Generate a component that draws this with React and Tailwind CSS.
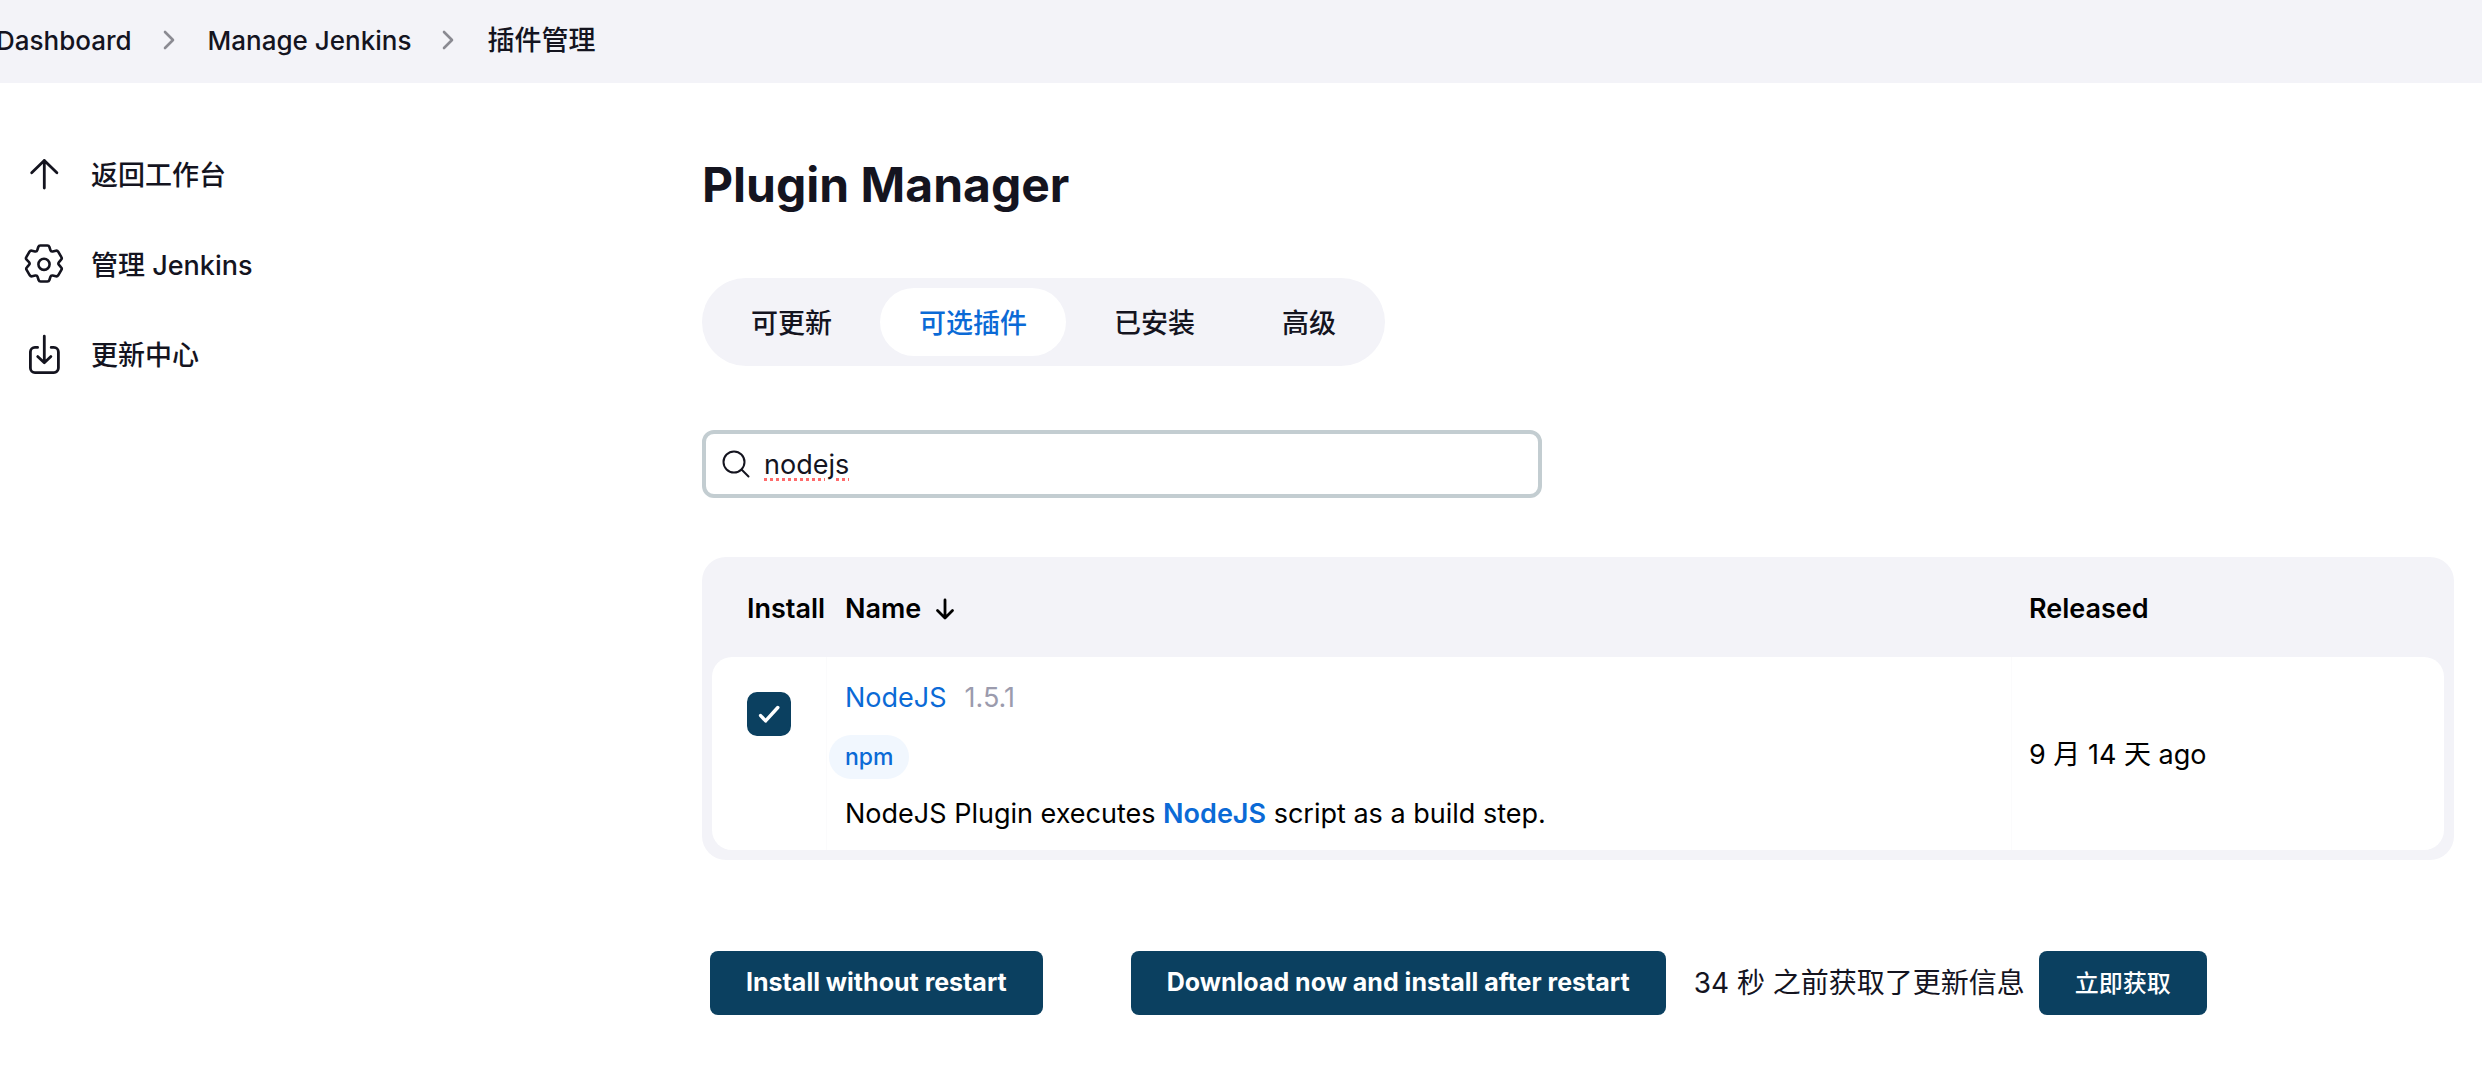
import React, { useState } from 'react';

const crumbs = ['Dashboard', 'Manage Jenkins', '插件管理'];

const tabs = ['可更新', '可选插件', '已安装', '高级'];

const plugins = [
  { name: 'NodeJS', version: '1.5.1', label: 'npm', released: '9 月 14 天 ago' },
];

const ArrowUpIcon = () => (
  <svg viewBox="0 0 40 40" className="size-10" fill="none" stroke="currentColor" strokeWidth="2.8" strokeLinecap="round" strokeLinejoin="round" aria-hidden="true">
    <path d="M7.700 18.700 20.300 6.500l12.600 12.200M20.300 6.500v27.500" />
  </svg>
);

const GearIcon = () => (
  <svg viewBox="0 0 40 40" className="size-10" fill="none" stroke="currentColor" strokeWidth="2.6" strokeLinejoin="round" aria-hidden="true">
    <path d="M16.6 1.5h6.8c1 0 1.7.6 2 1.5l1 3.1c.3 1 1.300 1.500 2.300 1.300l3.200-.7c.9-.2 1.800.2 2.300 1l3.200 5.500c.5.800.4 1.800-.3 2.500l-2.100 2.400c-.7.800-.7 2 0 2.800l2.100 2.400c.7.700.8 1.700.3 2.500l-3.200 5.500c-.5.800-1.400 1.200-2.300 1l-3.200-.7c-1-.2-2 .3-2.300 1.300l-1 3.100c-.3.900-1 1.500-2 1.500h-6.800c-1 0-1.700-.6-2-1.500l-1-3.100c-.3-1-1.300-1.500-2.300-1.300l-3.200.7c-.9.200-1.800-.2-2.300-1l-3.200-5.500c-.5-.8-.4-1.800.3-2.500l2.100-2.400c.7-.8.7-2 0-2.800L2.600 15.700c-.7-.7-.8-1.700-.3-2.500l3.200-5.500c.5-.8 1.400-1.200 2.300-1l3.200.7c1 .2 2-.3 2.300-1.300l1-3.100c.3-.9 1-1.500 2-1.500z" />
    <circle cx="20" cy="20.300" r="5.600" />
  </svg>
);

const DownloadIcon = () => (
  <svg viewBox="0 0 40 40" className="size-10" fill="none" stroke="currentColor" strokeWidth="2.8" strokeLinecap="round" strokeLinejoin="round" aria-hidden="true">
    <path d="M13.600 13.400H11a4.600 4.600 0 0 0-4.600 4.600V34a4.600 4.600 0 0 0 4.600 4.600h18.800a4.600 4.600 0 0 0 4.600-4.600V18a4.600 4.600 0 0 0-4.600-4.600H27.200M20.300 2.200V28.600M13.700 22.600l6.600 6.200 6.600-6.200" />
  </svg>
);

const tasks = [
  { text: '返回工作台', Icon: ArrowUpIcon },
  { text: '管理 Jenkins', Icon: GearIcon },
  { text: '更新中心', Icon: DownloadIcon },
];

const Breadcrumbs = () => (
  <nav aria-label="breadcrumb" className="h-[83px] overflow-hidden bg-[#f3f3f8]">
    <ol className="-ml-1 flex h-20 items-center text-[26px] font-medium">
      {crumbs.map((crumb, i) => (
        <li key={crumb} className="flex items-center">
          {i > 0 && (
            <svg viewBox="0 0 12 20" className="mr-[33px] ml-[31px] h-5 w-3" fill="none" stroke="#8a8a92" strokeWidth="2.6" strokeLinecap="round" strokeLinejoin="round" aria-hidden="true">
              <path d="m2 2 8 8-8 8" />
            </svg>
          )}
          <a href="#" className={i === 2 ? 'pt-0.5 text-[27px]' : ''}>{crumb}</a>
        </li>
      ))}
    </ol>
  </nav>
);

const Sidebar = () => (
  <aside className="w-[702px] shrink-0 pt-[46px] pl-6">
    <ul>
      {tasks.map(({ text, Icon }) => (
        <li key={text}>
          <a href="#" className="flex h-[90px] items-center gap-[27px] text-[27px] font-[450]">
            <Icon />
            <span className="pt-1">{text}</span>
          </a>
        </li>
      ))}
    </ul>
  </aside>
);

const Tabs = ({ active, onChange }) => (
  <div role="tablist" className="mt-[62px] flex w-fit gap-[9px] rounded-full bg-[#f3f3f8] p-2.5">
    {tabs.map((tab) => (
      <button
        key={tab}
        type="button"
        role="tab"
        aria-selected={tab === active}
        onClick={() => onChange(tab)}
        className={`h-[68px] cursor-pointer rounded-full px-[39px] pt-1 text-[27px] font-medium ${
          tab === active ? 'bg-white text-[#0b6ad6]' : ''
        }`}
      >
        {tab}
      </button>
    ))}
  </div>
);

const SearchBox = ({ value, onChange }) => (
  <label className="mt-16 flex h-[68px] w-full max-w-[840px] items-center gap-3.5 rounded-xl border-4 border-[#c3cdd1] bg-white pl-4">
    <svg viewBox="0 0 28 28" className="size-7 shrink-0" fill="none" stroke="currentColor" strokeWidth="2" strokeLinecap="round" aria-hidden="true">
      <circle cx="12" cy="12" r="10.500" />
      <path d="m19.500 19.500 7 7" />
    </svg>
    <input
      type="text"
      aria-label="Search plugins"
      value={value}
      spellCheck="false"
      onChange={(e) => onChange(e.target.value)}
      className="min-w-0 flex-1 pt-0.5 text-[27px] underline decoration-[#ff6b6b] decoration-dotted decoration-3 underline-offset-4 outline-none"
    />
  </label>
);

const PluginTable = () => {
  const [checked, setChecked] = useState(true);

  return (
    <div className="mt-[59px] rounded-3xl bg-[#f3f3f8] px-2.5 pb-2.5 text-[27px] text-black">
      <table className="w-full table-fixed border-separate border-spacing-0 text-left">
        <colgroup>
          <col className="w-[115px]" />
          <col />
          <col className="w-[432px]" />
        </colgroup>
        <thead>
          <tr className="h-[100px]">
            <th className="pt-1 pl-[35px] font-semibold">Install</th>
            <th className="pt-1 pl-[18px] font-semibold">
              <span className="flex items-center gap-3.5">
                Name
                <svg viewBox="0 0 20 24" className="h-6 w-5" fill="none" stroke="currentColor" strokeWidth="2.8" strokeLinecap="round" strokeLinejoin="round" aria-hidden="true">
                  <path d="M10 3v18M2.500 13.500 10 21l7.500-7.500" />
                </svg>
              </span>
            </th>
            <th className="pt-1 pl-[17px] font-semibold">Released</th>
          </tr>
        </thead>
        <tbody>
          {plugins.map((plugin) => (
            <tr key={plugin.name} className="h-[193px]">
              <td className="rounded-l-[20px] border-r border-[#fbfbfc] bg-white pt-[35px] pl-[35px] align-top">
                <span className="grid size-11">
                  <input
                    type="checkbox"
                    aria-label={`Install ${plugin.name}`}
                    checked={checked}
                    onChange={(e) => setChecked(e.target.checked)}
                    className="peer col-start-1 row-start-1 size-11 appearance-none rounded-[10px] border-2 border-[#0b4060] checked:bg-[#0b4060]"
                  />
                  <svg viewBox="0 0 44 44" className="pointer-events-none invisible col-start-1 row-start-1 size-11 peer-checked:visible" fill="none" stroke="white" strokeWidth="3.400" strokeLinecap="round" strokeLinejoin="round" aria-hidden="true">
                    <path d="m13.600 23.600 5 5.300L30.800 15.500" />
                  </svg>
                </span>
              </td>
              <td className="border-r border-[#fbfbfc] bg-white pt-[23px] pl-[18px] align-top">
                <div className="flex h-9 items-center gap-[18px]">
                  <a href="#" className="text-[#0b6ad6]">{plugin.name}</a>
                  <span className="text-[#9b9bad]">{plugin.version}</span>
                </div>
                <a href="#" className="mt-[19px] -ml-4 flex h-11 w-fit items-center rounded-full bg-[#f1f7fe] px-4 text-[23px] font-medium text-[#0b6ad6]">
                  {plugin.label}
                </a>
                <p className="mt-[17px] leading-9">
                  NodeJS Plugin executes <a href="#" className="font-semibold text-[#0b6ad6]">NodeJS</a> script as a build step.
                </p>
              </td>
              <td className="rounded-r-[20px] bg-white pt-1 pl-[17px]">{plugin.released}</td>
            </tr>
          ))}
        </tbody>
      </table>
    </div>
  );
};

const ActionButton = ({ children, className = 'text-[25px] font-bold' }) => (
  <button type="button" className={`h-16 shrink-0 cursor-pointer rounded-lg bg-[#0b4060] px-9 text-white ${className}`}>
    {children}
  </button>
);

const App = () => {
  const [activeTab, setActiveTab] = useState('可选插件');
  const [query, setQuery] = useState('nodejs');

  return (
    <div className="bg-white font-[Inter,'Noto_Sans_CJK_SC',sans-serif] text-[#14141f]">
      <Breadcrumbs />
      <div className="flex">
        <Sidebar />
        <main className="min-w-0 flex-1 pt-[70px] pr-7">
          <h1 className="text-5xl leading-[63px] font-bold">Plugin Manager</h1>
          <Tabs active={activeTab} onChange={setActiveTab} />
          <SearchBox value={query} onChange={setQuery} />
          <PluginTable />
          <div className="mt-[91px] flex items-center pl-2">
            <ActionButton>Install without restart</ActionButton>
            <div className="ml-[88px] flex items-center">
              <ActionButton>Download now and install after restart</ActionButton>
              <span className="mr-3.5 ml-7 text-[28px] font-normal">34 秒 之前获取了更新信息</span>
              <ActionButton className="pt-0.5 text-2xl font-medium">立即获取</ActionButton>
            </div>
          </div>
        </main>
      </div>
    </div>
  );
};

export default App;
